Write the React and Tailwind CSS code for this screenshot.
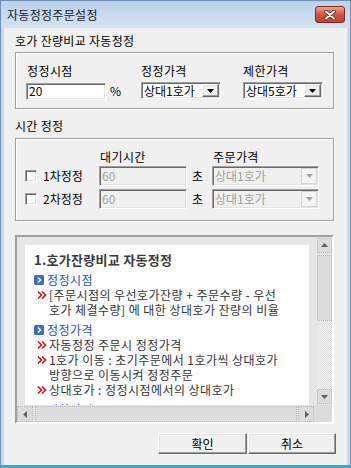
import React from "react";

const sunken =
  "border border-t-[#a0a0a0] border-l-[#a0a0a0] border-r-white border-b-white shadow-[inset_1px_1px_0_#696969,inset_-1px_-1px_0_#e3e3e3]";
const raised =
  "border border-t-white border-l-white border-r-[#696969] border-b-[#696969] shadow-[inset_-1px_-1px_0_#a0a0a0,inset_1px_1px_0_#e3e3e3] bg-[#f0f0f0]";
const group =
  "border border-[#a0a0a0] shadow-[1px_1px_0_#fff,inset_1px_1px_0_#fff]";

const Combo = ({ value, className, disabled }) => (
  <div
    className={`${sunken} ${className} ${
      disabled ? "bg-[#f0f0f0] text-[#a0a0a0]" : "bg-white text-black"
    } flex items-center justify-between pl-[2px] pr-[1px]`}
  >
    <span className="text-[12px] leading-none">{value}</span>
    {disabled ? (
      <div className="w-[16px] h-[16px] flex items-center justify-center bg-[#f4f4f4] border border-[#d4d4d4]">
        <svg width="7" height="4" viewBox="0 0 7 4">
          <path d="M0 0h7L3.5 4z" fill="#a0a0a0" />
        </svg>
      </div>
    ) : (
      <div className={`${raised} w-[17px] h-[13px] flex items-center justify-center`}>
        <svg width="7" height="4" viewBox="0 0 7 4">
          <path d="M0 0h7L3.5 4z" fill="#000" />
        </svg>
      </div>
    )}
  </div>
);

const Heading = ({ children, className }) => (
  <div className={`flex items-center gap-[3px] text-[#2450c8] ${className}`}>
    <svg width="10" height="10" viewBox="0 0 10 10">
      <rect width="10" height="10" rx="1.5" fill="#4169c8" />
      <path d="M4 2.5 6.5 5 4 7.5" stroke="#fff" strokeWidth="1.6" fill="none" />
    </svg>
    <span>{children}</span>
  </div>
);

const Bullet = ({ children }) => (
  <div className="flex items-center">
    <span className="w-[15px] flex items-center pl-[3px]">
      <svg width="10" height="10" viewBox="0 0 10 10">
        <path d="M1 1.5 4.5 5 1 8.5M5 1.5 8.5 5 5 8.5" stroke="#d01818" strokeWidth="1.7" fill="none" />
      </svg>
    </span>
    <span>{children}</span>
  </div>
);

const Arrow = ({ d }) => (
  <svg width="7" height="7" viewBox="0 0 7 7">
    <path d={d} fill="#606060" />
  </svg>
);

const SBtn = ({ children, className }) => (
  <div
    className={`bg-[#dcdcdc] border border-dotted border-[#b8b8b8] flex items-center justify-center ${className}`}
  >
    {children}
  </div>
);

export default function App() {
  return (
    <div className="w-[351px] h-[468px] flex flex-col bg-[#c6d9ef] border border-[#6f8fb8] border-b-[3px] border-b-[#3aa6dc] font-['Noto_Sans_CJK_KR',sans-serif] text-black overflow-hidden">
      {/* title bar */}
      <div className="h-[27px] flex items-start justify-between pl-[6px] pr-[5px] bg-linear-to-b from-[#bad1eb] to-[#d3e2f3]">
        <span className="text-[12px] leading-[14px] mt-[7px] text-[#1a1a1a] tracking-[0.3px]">자동정정주문설정</span>
        <div className="mt-[5px] w-[30px] h-[17px] rounded-[3px] border border-[#7a2b1d] bg-linear-to-b from-[#e9a493] via-[#d0573d] to-[#c0432a] flex items-center justify-center">
          <svg width="12" height="10" viewBox="0 0 12 10">
            <path d="M2 1.5 10 8.5M10 1.5 2 8.5" stroke="#4a1a10" strokeWidth="3.4" strokeLinecap="round" />
            <path d="M2 1.5 10 8.5M10 1.5 2 8.5" stroke="#fff" strokeWidth="2" strokeLinecap="round" />
          </svg>
        </div>
      </div>

      {/* client area */}
      <div className="flex-1 ml-[3px] mr-[3px] bg-[#f0f0f0] px-[11px] pt-[6px] text-[12px]">
        <div className="leading-[14px] tracking-[0.3px]">호가 잔량비교 자동정정</div>
        <div className={`${group} mt-[4px] h-[57px] w-[319px] pl-[10px] pt-[11px]`}>
          <div className="flex">
            <div className="w-[115px]">
              <div className="leading-[14px] pl-[1px] tracking-[0.4px]">정정시점</div>
              <div className="flex items-center mt-[4px]">
                <div className={`${sunken} bg-white w-[80px] h-[17px] flex items-center pl-[2px] leading-none`}>20</div>
                <span className="ml-[4px]">%</span>
              </div>
            </div>
            <div className="w-[102px]">
              <div className="leading-[14px] tracking-[0.4px]">정정가격</div>
              <Combo value="상대1호가" className="mt-[4px] w-[80px] h-[17px]" />
            </div>
            <div className="w-[80px]">
              <div className="leading-[14px] tracking-[0.4px]">제한가격</div>
              <Combo value="상대5호가" className="mt-[4px] w-[80px] h-[17px]" />
            </div>
          </div>
        </div>

        <div className="leading-[14px] mt-[10px] tracking-[0.3px]">시간 정정</div>
        <div className={`${group} mt-[5px] h-[83px] w-[319px] pl-[9px] pt-[11px]`}>
          <div className="flex leading-[14px] tracking-[0.4px]">
            <div className="w-[75px]" />
            <div className="w-[113px]">대기시간</div>
            <div>주문가격</div>
          </div>
          {["1차정정", "2차정정"].map((t, i) => (
            <div key={t} className={`flex items-center h-[20px] ${i === 0 ? "mt-[2px]" : "mt-[3px]"}`}>
              <div className="w-[74px] flex items-center">
                <div className={`${sunken} bg-white w-[12px] h-[12px]`} />
                <span className="ml-[6px]">{t}</span>
              </div>
              <div className={`${sunken} bg-[#f0f0f0] text-[#a0a0a0] w-[88px] h-[20px] flex items-center pl-[2px] leading-none`}>60</div>
              <div className="w-[25px] pl-[5px]">초</div>
              <Combo value="상대1호가" disabled className="w-[107px] h-[20px]" />
            </div>
          ))}
        </div>

        {/* help box */}
        <div className="mt-[14px] w-[319px] h-[189px] border-2 border-t-[#a0a0a0] border-l-[#a0a0a0] border-r-white border-b-white shadow-[inset_1px_1px_0_#696969] flex flex-col">
          <div className="flex h-[168px]">
            <div className="flex-1 bg-[#e6e6e6] overflow-hidden pt-[8px] px-[8px]">
              <div className="bg-white h-[200px] pl-[9px] pt-[7px] text-[12px] leading-[15px] text-[#333] whitespace-nowrap tracking-[0.45px]">
                <div className="text-[13px] font-bold leading-[16px] text-[#3a3a3a] tracking-[0.3px]">1.호가잔량비교 자동정정</div>
                <Heading className="mt-[4px]">정정시점</Heading>
                <Bullet>[주문시점의 우선호가잔량 + 주문수량 - 우선</Bullet>
                <div className="pl-[15px]">호가 체결수량] 에 대한 상대호가 잔량의 비율</div>
                <Heading className="mt-[5px]">정정가격</Heading>
                <Bullet>자동정정 주문시 정정가격</Bullet>
                <Bullet>1호가 이동 : 초기주문에서 1호가씩 상대호가</Bullet>
                <div className="pl-[15px]">방향으로 이동시켜 정정주문</div>
                <Bullet>상대호가 : 정정시점에서의 상대호가</Bullet>
                <Heading className="mt-[5px]">제한가격</Heading>
              </div>
            </div>
            <div className="w-[15px] flex flex-col bg-[#e4e4e4]">
              <SBtn className="h-[15px] mt-[1px]">
                <Arrow d="M0 5h7L3.5 1z" />
              </SBtn>
              <SBtn className="h-[66px] mt-[2px] bg-[#d8d8d8]" />
              <div className="flex-1 bg-[repeating-conic-gradient(#f6f6f6_0_25%,#dddddd_0_50%)] bg-[length:2px_2px]" />
              <SBtn className="h-[15px] mb-[1px]">
                <Arrow d="M0 2h7L3.5 6z" />
              </SBtn>
            </div>
          </div>
          <div className="flex h-[17px] bg-[#e4e4e4]">
            <SBtn className="w-[16px] h-[16px] mt-[1px]">
              <Arrow d="M5 0v7L1 3.5z" />
            </SBtn>
            <SBtn className="w-[262px] h-[16px] mt-[1px] ml-[2px] bg-[#d8d8d8]" />
            <SBtn className="w-[16px] h-[16px] mt-[1px] ml-[1px]">
              <Arrow d="M2 0v7L6 3.5z" />
            </SBtn>
            <div className="flex-1 bg-[#dcdcdc]" />
          </div>
        </div>

        {/* buttons */}
        <div className="flex justify-end gap-[1px] mt-[9px]">
          <button className={`${raised} w-[89px] h-[21px] text-[12px] leading-none`}>확인</button>
          <button className={`${raised} w-[88px] h-[21px] text-[12px] leading-none`}>취소</button>
        </div>
      </div>
    </div>
  );
}
